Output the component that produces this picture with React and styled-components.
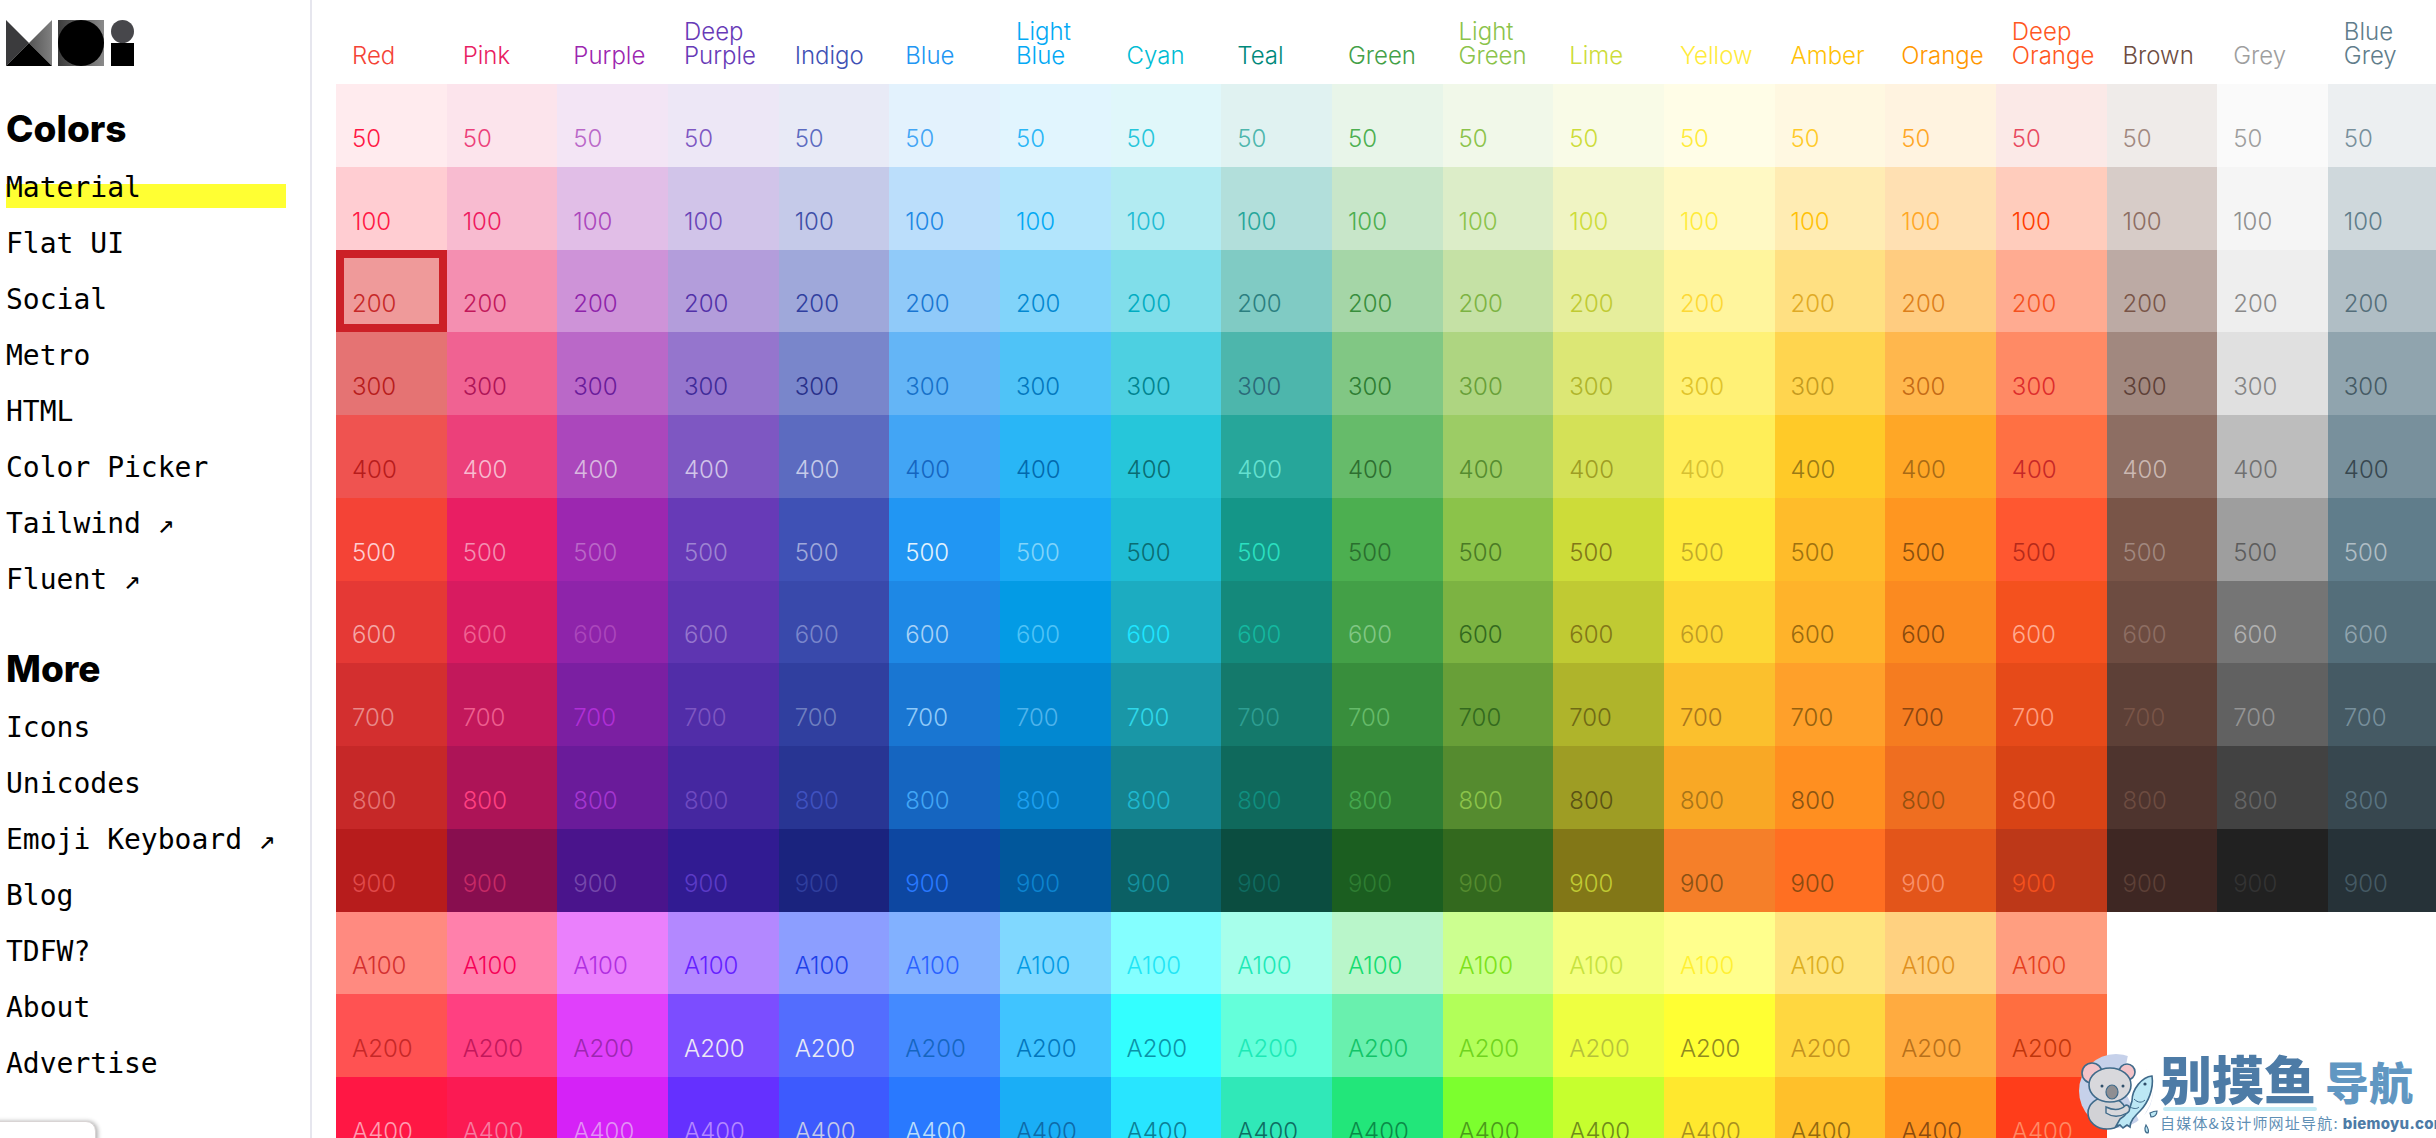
import React from "react";
import styled, { createGlobalStyle } from "styled-components";

const rowNames = ["50", "100", "200", "300", "400", "500", "600", "700", "800", "900", "A100", "A200", "A400"];

const hex = str => str.split(" ").map(c => "#" + c);

const palette = [
  { name: "Red", title: "#f44336",
    shades: "ffebee ffcdd2 ef9a9a e57373 ef5350 f44336 e53935 d32f2f c62828 b71c1c ff8a80 ff5252 ff1744",
    labels: "ff1744 ff1744 c62828 b71c1c b71c1c ffcdd2 f4a6a6 e88a8a e57373 e04a4a d32f2f c62828 ff9cb0" },
  { name: "Pink", title: "#e91e63",
    shades: "fce4ec f8bbd0 f48fb1 f06292 ec407a e91e63 d81b60 c2185b ad1457 880e4f ff80ab ff4081 fb1a53",
    labels: "ec407a ee1a5f c2185b ad1457 f8bbd0 f48fb1 f06292 ee5f8f ff4081 c62a66 f50057 c2185b f77ba0" },
  { name: "Purple", title: "#9c27b0",
    shades: "f3e5f5 e1bee7 ce93d8 ba68c8 ab47bc 9c27b0 8e24aa 7b1fa2 6a1b9a 4a148c ea80fc e040fb d522f7",
    labels: "ba68c8 ab47bc 8e24aa 6a1b9a d9b8e0 ba68c8 ab47bc b02fd6 a436d0 7548ab b02ee0 9c27b0 e391f5" },
  { name: "Deep Purple", title: "#673ab7",
    shades: "ede7f6 d1c4e9 b39ddb 9575cd 7e57c2 673ab7 5e35b1 512da8 4527a0 311b92 b388ff 7c4dff 6530ff",
    labels: "7e57c2 6a45b8 5231a8 3f2a98 d1c4e9 9e84d2 9575cd 7e57c2 6f4ac0 5c3bc7 651fff ede7f6 b388ff" },
  { name: "Indigo", title: "#3f51b5",
    shades: "e8eaf6 c5cae9 9fa8da 7986cb 5c6bc0 3f51b5 3949ab 303f9f 283593 1a237e 8c9eff 536dfe 3d5afe",
    labels: "5c6bc0 3f4fa8 303f9f 28308a c5cae9 9fa8da 7986cb 6f7fc0 4052c0 303f9f 1e40e8 e8eaf6 c5cae9" },
  { name: "Blue", title: "#2196f3",
    shades: "e3f2fd bbdefb 90caf9 64b5f6 42a5f5 2196f3 1e88e5 1976d2 1565c0 0d47a1 82b1ff 448aff 2979ff",
    labels: "42a5f5 1e88e5 1976d2 1670c8 1565c0 e3f2fd a8d2f7 90caf9 42a5f5 2979ff 2962ff 1565c0 bbdefb" },
  { name: "Light Blue", title: "#03a9f4",
    shades: "e1f5fe b3e5fc 81d4fa 4fc3f7 29b6f6 1aa9f4 039be5 0288d1 0277bd 01579b 80d8ff 40c4ff 1aaef6",
    labels: "29b6f6 03a9f4 0288d1 0277bd 0269ad 81d4fa 4fc3f7 4fb4ec 1ea0f0 0d84d0 039be5 0277bd 0e6aa8" },
  { name: "Cyan", title: "#00bcd4",
    shades: "e0f7fa b2ebf2 80deea 4dd0e1 26c6da 1fbcd4 1cacc1 1997a7 14838f 0b6064 84ffff 33ffff 28e5ff",
    labels: "26c6da 1fbcd4 00acc1 00838f 0a6c72 0a6c72 1fe5ff 2fd8ea 1fb8cf 14919e 1fe5f5 0a93a8 0a7f96" },
  { name: "Teal", title: "#00897b",
    shades: "e0f2f1 b2dfdb 80cbc4 4db6ac 26a69a 149688 14897b 14796b 0f695c 0b4d40 a7ffeb 64ffda 30e8b8",
    labels: "4db6ac 26a69a 2b7f80 2a6a78 64e0d0 2be0c0 14b8a0 2e9e92 0f8f80 0f6b60 1de9b6 1de9b6 0d6e62" },
  { name: "Green", title: "#43a047",
    shades: "e8f5e9 c8e6c9 a5d6a7 81c784 66bb6a 4caf50 43a047 388e3c 2e7d32 1b5e20 b9f6ca 69f0ae 22e67a",
    labels: "4caf50 4caf50 388e3c 2e7d32 2e6e30 2a6e2e 81c784 66bb6a 45a84e 2e7d32 14dc70 12c468 0a8a48" },
  { name: "Light Green", title: "#8bc34a",
    shades: "f1f8e9 dcedc8 c5e1a5 aed581 9ccc65 8bc34a 7cb342 689f38 558b2f 33691e ccff90 b2ff59 7cff2e",
    labels: "8bc34a 8bc34a 7cb342 689f38 558b2f 4a7a25 33691e 33691e 8bc34a 558b2f 7be21a 6fd41e 4a9a1a" },
  { name: "Lime", title: "#cddc39",
    shades: "f9fbe7 f0f4c3 e6ee9c dce775 d4e157 cddc39 c0ca33 afb42b 9e9d24 827717 f4ff81 eeff41 c6ff2e",
    labels: "cddc39 cddc39 c0ca33 afb42b 9e9d24 827717 827717 6f6a15 5a5214 c0ca33 c6e23e b5c13a 6f8a1a" },
  { name: "Yellow", title: "#ffeb3b",
    shades: "fffde7 fff9c4 fff59d fff176 ffee58 ffeb3b fdd835 fbc02d f9a825 f57f29 ffff8d ffff33 ffe82e",
    labels: "ffeb3b ffeb3b fdd835 e0c32a d6c032 c0a92a bd9a24 a8761c a87418 8a5114 fff033 8f8a20 a88f1f" },
  { name: "Amber", title: "#ffc107",
    shades: "fff8e1 ffecb3 ffe082 ffd54f ffca28 ffbc2a ffb32a ffa02a ff8f20 ff6f22 ffe57f ffd740 ffc02a",
    labels: "ffca28 ffc107 e0aa25 c49a1e 9a7a15 a0720f 9a6a10 94600f 8a5412 8a4a10 dcae1e c4921e 936a10" },
  { name: "Orange", title: "#ff9800",
    shades: "fff3e0 ffe0b2 ffcc80 ffb74d ffa726 ff9620 fb8a20 f57c20 ef6e20 e3551a ffd180 ffab40 ff9420",
    labels: "ffa726 ffa726 dd7f1a c46a15 a86a15 8a4f0d 8a4a0d 8a4510 94500f f9906a e0901e b8701a 8a4b10" },
  { name: "Deep Orange", title: "#ff5722",
    shades: "fbe9e7 ffccbc ffab91 ff8a65 ff7043 ff5730 f4511e e64a19 d84315 bd3818 ff9e80 ff6e40 ff3d1a",
    labels: "e84a5f ff3d00 f4511e dd2c2c c62828 b52a1a ffab91 ff9e80 ff8a65 f4511e e53f1e bf360c ff8a65" },
  { name: "Brown", title: "#6d4c41",
    shades: "efebe9 d7ccc8 bcaaa4 a1887f 8d6e63 795548 6d4c41 5d4037 4e342e 3e2723",
    labels: "a1887f 8d6e63 795548 5d4037 cbb8b2 a1887f 8d6e63 795548 6d4c41 5d4037" },
  { name: "Grey", title: "#9e9e9e",
    shades: "fafafa f5f5f5 eeeeee e0e0e0 bdbdbd 9e9e9e 757575 616161 424242 212121",
    labels: "9e9e9e 8f8f8f 8a8a8a 858585 707070 5c5c5c b0b0b0 949494 666666 333333" },
  { name: "Blue Grey", title: "#607d8b",
    shades: "eceff1 cfd8dc b0bec5 90a4ae 78909c 607d8b 546e7a 455a64 37474f 263238",
    labels: "78909c 607d8b 546e7a 455a64 37474f b0bec5 90a4ae 78909c 5a7482 455a64" },
];

const colorLinks = ["Material", "Flat UI", "Social", "Metro", "HTML", "Color Picker", "Tailwind ↗", "Fluent ↗"];
const moreLinks = ["Icons", "Unicodes", "Emoji Keyboard ↗", "Blog", "TDFW?", "About", "Advertise"];

const Logo = () => (
  <LogoMark viewBox="0 0 128 46" aria-label="MUI">
    <defs>
      <linearGradient id="rightTri" x1="0" x2="1" y1="0" y2="0">
        <stop offset="0" stopColor="#555" />
        <stop offset="1" stopColor="#808080" />
      </linearGradient>
      <linearGradient id="backSquare" x1="0" x2="1" y1="0" y2="0">
        <stop offset="0" stopColor="#3c3c3c" />
        <stop offset="1" stopColor="#8a8a8a" />
      </linearGradient>
    </defs>
    <path d="M0 0 L23 23 L0 46 Z" fill="#3b3b3d" />
    <path d="M46 0 L23 23 L46 46 Z" fill="url(#rightTri)" />
    <path d="M0 46 L23 23 L46 46 Z" fill="#000" />
    <rect x="52" y="0" width="46" height="46" fill="url(#backSquare)" />
    <circle cx="75" cy="23" r="23" fill="#000" />
    <circle cx="116.5" cy="11.5" r="11.5" fill="#47474b" />
    <rect x="105" y="23" width="23" height="23" fill="#000" />
  </LogoMark>
);

const Koala = () => (
  <KoalaMark viewBox="0 0 90 93">
    <circle cx="46" cy="46" r="37" fill="#c6d1ea" />
    <path d="M58 10 A37 37 0 0 1 80 60 L70 78 L52 40 Z" fill="#fff" />
    <ellipse cx="37" cy="68" rx="19" ry="16" fill="#d2d2d6" stroke="#3f6a8a" strokeWidth="1.6" />
    <circle cx="22" cy="28" r="10" fill="#f3c3c8" stroke="#3f6a8a" strokeWidth="1.6" />
    <circle cx="57" cy="27" r="8" fill="#f3c3c8" stroke="#3f6a8a" strokeWidth="1.6" />
    <ellipse cx="40" cy="40" rx="21" ry="17" fill="#d8d8dc" stroke="#3f6a8a" strokeWidth="1.6" />
    <ellipse cx="42" cy="47" rx="6" ry="7" fill="#8e8e92" stroke="#3f6a8a" strokeWidth="1.2" />
    <circle cx="32" cy="41" r="1.5" fill="#2f4f6a" />
    <circle cx="53" cy="41" r="1.5" fill="#2f4f6a" />
    <path d="M82 31 C72 32 62 44 62 56 C60 66 54 72 50 74 L46 81 L50 80 L53 83 L57 80 L60 82 C60 76 64 72 70 66 C78 58 84 44 82 31 Z"
      fill="#bce8f5" stroke="#3f6a8a" strokeWidth="1.6" />
    <circle cx="75" cy="39" r="1.6" fill="#2f4f6a" />
    <path d="M64 54 C68 58 72 58 75 55 M60 62 C64 64 67 64 69 62" fill="none" stroke="#3f6a8a" strokeWidth="1" />
    <path d="M36 62 C44 66 50 66 56 60 C60 60 61 66 57 68 C50 72 42 72 36 68 Z" fill="#d8d8dc" stroke="#3f6a8a" strokeWidth="1.4" />
    <path d="M80 68 C84 66 86 66 87 66 C87 70 84 72 81 72 Z" fill="#bce8f5" stroke="#3f6a8a" strokeWidth="1.2" />
    <path d="M76 80 C78 83 79 86 78 88 C75 88 74 84 76 80 Z" fill="#bce8f5" stroke="#3f6a8a" strokeWidth="1.2" />
  </KoalaMark>
);

const Swatches = ({ color }) =>
  hex(color.shades).map((shade, i) => (
    <Swatch
      key={rowNames[i]}
      $bg={shade}
      $fg={hex(color.labels)[i]}
      $selected={color.name === "Red" && rowNames[i] === "200"}
    >
      {rowNames[i]}
    </Swatch>
  ));

export default () => (
  <Page>
    <GlobalStyle />
    <Sidebar>
      <Logo />
      <SectionTitle>Colors</SectionTitle>
      {colorLinks.map(link => (
        <NavLink key={link} $active={link === "Material"}>{link}</NavLink>
      ))}
      <SectionTitle $spaced>More</SectionTitle>
      {moreLinks.map(link => (
        <NavLink key={link}>{link}</NavLink>
      ))}
      <CornerCard />
    </Sidebar>
    <ColorTable>
      {palette.map(color => (
        <Column key={color.name}>
          <ColumnTitle $color={color.title}>
            {color.name.split(" ").map(word => <span key={word}>{word}</span>)}
          </ColumnTitle>
          <Swatches color={color} />
        </Column>
      ))}
    </ColorTable>
    <Watermark>
      <Koala />
      <BrandBlock>
        <BrandName>别摸鱼<BrandLight>导航</BrandLight></BrandName>
        <BrandRule />
        <BrandLine>自媒体&amp;设计师网址导航:<BrandUrl>biemoyu.com</BrandUrl></BrandLine>
      </BrandBlock>
    </Watermark>
  </Page>
);

const GlobalStyle = createGlobalStyle`
  html, body {
    margin: 0;
    padding: 0;
    background: #fff;
    overflow: hidden;
  }
`;

const Page = styled.div`
  position: relative;
  display: flex;
  width: 2436px;
  height: 1138px;
  overflow: hidden;
  font-family: Inter, "Liberation Sans", sans-serif;
`;

const Sidebar = styled.nav`
  position: relative;
  flex: none;
  box-sizing: border-box;
  display: flex;
  flex-direction: column;
  align-items: flex-start;
  width: 312px;
  padding: 20px 0 0 6px;
  border-right: 2px solid #e6e6ee;
`;

const LogoMark = styled.svg`
  display: block;
  width: 128px;
  height: 46px;
  flex: none;
`;

const SectionTitle = styled.h2`
  margin: ${p => (p.$spaced ? "30px" : "41px")} 0 18px 0;
  font-family: Inter, "Liberation Sans", sans-serif;
  font-size: 37px;
  font-weight: 800;
  line-height: 44px;
  color: #000;
`;

const NavLink = styled.a`
  display: block;
  box-sizing: border-box;
  width: 280px;
  height: 39px;
  margin-bottom: 17px;
  font-family: "DejaVu Sans Mono", "Liberation Mono", monospace;
  font-size: 28px;
  line-height: 38px;
  white-space: pre;
  color: #000;
  background: ${p =>
    p.$active ? "linear-gradient(transparent 15px, #ffff33 15px)" : "none"};
`;

const CornerCard = styled.div`
  position: absolute;
  left: -6px;
  bottom: -4px;
  width: 100px;
  height: 19px;
  background: #fff;
  border: 1px solid #d9d4d4;
  border-radius: 0 10px 0 0;
  box-shadow: 2px 0 4px rgba(0, 0, 0, 0.3);
`;

const ColorTable = styled.main`
  display: flex;
  flex: none;
  padding-left: 24px;
`;

const Column = styled.section`
  flex: none;
  width: 110.66px;
`;

const ColumnTitle = styled.div`
  box-sizing: border-box;
  display: flex;
  flex-direction: column;
  justify-content: flex-end;
  height: 84px;
  padding: 0 0 16px 16px;
  font-size: 24px;
  font-weight: 350;
  line-height: 24px;
  white-space: nowrap;
  color: ${p => p.$color};
`;

const Swatch = styled.div.attrs(p => ({
  style: { background: p.$bg, color: p.$fg },
}))`
  box-sizing: border-box;
  display: flex;
  align-items: flex-end;
  height: 82.75px;
  padding: 0 0 16px 16px;
  font-size: 24px;
  font-weight: 350;
  line-height: 24px;
  box-shadow: ${p => (p.$selected ? "inset 0 0 0 8px #cc2027" : "none")};
`;

const Watermark = styled.div`
  position: absolute;
  left: 2070px;
  top: 1045px;
  display: flex;
  width: 366px;
  height: 93px;
`;

const KoalaMark = styled.svg`
  flex: none;
  width: 90px;
  height: 93px;
`;

const BrandBlock = styled.div`
  display: flex;
  flex-direction: column;
  margin-top: 5px;
  font-family: "Noto Sans CJK SC", sans-serif;
`;

const BrandName = styled.div`
  height: 56px;
  font-size: 52px;
  font-weight: 900;
  line-height: 56px;
  white-space: nowrap;
  color: #4d7ba6;
`;

const BrandLight = styled.span`
  margin-left: 9px;
  font-size: 44px;
  font-weight: 900;
  color: #6197c2;
`;

const BrandRule = styled.div`
  width: 154px;
  height: 4px;
  margin: 1px 0 0 3px;
  border-radius: 2px;
  background: #c3ebf5;
`;

const BrandLine = styled.div`
  margin-top: 2px;
  font-size: 15px;
  line-height: 20px;
  letter-spacing: 1.2px;
  white-space: nowrap;
  color: #5f8fb5;
`;

const BrandUrl = styled.span`
  margin-left: 4px;
  font-family: Inter, sans-serif;
  font-size: 15px;
  font-weight: 800;
  letter-spacing: 0.3px;
  color: #4d7ba6;
`;
